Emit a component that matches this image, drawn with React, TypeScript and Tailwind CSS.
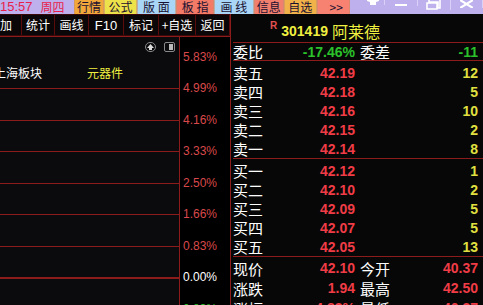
const cn = { fontFamily: '"Noto Sans CJK SC", "Liberation Sans", sans-serif' }
const num = { fontFamily: '"Liberation Sans", Arial, sans-serif' }

const tabs = [
  { t: '行情', w: 'w-[31px]', bg: 'bg-[#f2a73a]' },
  { t: '公式', w: 'w-[33px]', bg: 'bg-[#eee24a]' },
  { t: '版 面', w: 'w-[40px]', bg: 'bg-[#a9d6f6]' },
  { t: '板 指', w: 'w-[39px]', bg: 'bg-[#f27a66]' },
  { t: '画 线', w: 'w-[40px]', bg: 'bg-[#a9d6f6]' },
  { t: '信息', w: 'w-[31px]', bg: 'bg-[#f27e6e]' },
  { t: '自选', w: 'w-[33px]', bg: 'bg-[#f2b24a]' },
  { t: '>>', w: 'w-[34px]', bg: 'bg-[#f78271]' },
]

const tools = [
  { t: '加', w: 'w-[22px]', c: 'justify-start' },
  { t: '统计', w: 'w-[33px]', c: 'justify-center' },
  { t: '画线', w: 'w-[34px]', c: 'justify-center' },
  { t: 'F10', w: 'w-[35px]', c: 'justify-center' },
  { t: '标记', w: 'w-[35px]', c: 'justify-center' },
  { t: '+自选', w: 'w-[37px]', c: 'justify-center' },
  { t: '返回', w: 'w-[34px]', c: 'justify-center' },
]

const axis = [
  { v: '5.83%', c: 'text-[#d9494b]' },
  { v: '4.99%', c: 'text-[#d9494b]' },
  { v: '4.16%', c: 'text-[#d9494b]' },
  { v: '3.33%', c: 'text-[#d9494b]' },
  { v: '2.50%', c: 'text-[#d9494b]' },
  { v: '1.66%', c: 'text-[#d9494b]' },
  { v: '0.83%', c: 'text-[#d9494b]' },
  { v: '0.00%', c: 'text-white' },
  { v: '0.83%', c: 'text-[#2bbf2b]' },
]

const sells = [
  ['卖五', '42.19', '12'],
  ['卖四', '42.18', '5'],
  ['卖三', '42.16', '10'],
  ['卖二', '42.15', '2'],
  ['卖一', '42.14', '8'],
]

const buys = [
  ['买一', '42.12', '1'],
  ['买二', '42.10', '2'],
  ['买三', '42.09', '5'],
  ['买四', '42.07', '5'],
  ['买五', '42.05', '13'],
]

const quotes = [
  ['现价', '42.10', '今开', '40.37'],
  ['涨跌', '1.94', '最高', '42.50'],
  ['涨幅', '4.83%', '最低', '40.37'],
]

function QuoteRow({ a, b, c, d, bColor, dColor, h }: { a: string; b: string; c?: string; d: string; bColor: string; dColor: string; h: string }) {
  return (
    <div className={`flex ${h} items-center`}>
      <div className="flex w-[122px] items-center justify-between">
        <span className="text-[15px] leading-none text-white" style={cn}>{a}</span>
        <span className={`text-[14px] font-bold leading-none ${bColor}`} style={num}>{b}</span>
      </div>
      <div className="ml-[5px] flex flex-1 items-center justify-between pr-[5px]">
        <span className="text-[15px] leading-none text-white" style={cn}>{c}</span>
        <span className={`text-[14px] font-bold leading-none ${dColor}`} style={num}>{d}</span>
      </div>
    </div>
  )
}

export default function App() {
  return (
    <div className="flex h-[305px] w-[483px] flex-col overflow-hidden bg-black">
      {/* title strip */}
      <div className="flex h-[14px] shrink-0 items-stretch bg-[#bdb0ec] text-[12px] leading-[14px] text-[#1a1030]" style={cn}>
        <div className="flex w-[75px] items-center gap-[8px] text-[#e8204a]">
          <span style={num} className="text-[13px]">15:57</span>
          <span>周四</span>
        </div>
        {tabs.map((t) => (
          <div
            key={t.t}
            className={`flex ${t.w} items-center border-x border-[#c89070]/60 ${t.bg} ${t.t === '>>' ? 'justify-start pl-[12px]' : 'justify-center'}`}
          >
            <span className="whitespace-pre">{t.t}</span>
          </div>
        ))}
        <div className="w-[13px]" />
        <div className="flex flex-1 items-start">
          <div className="flex w-[22px] justify-center border-r border-[#d8d0f6]">
            <svg width="12" height="5" viewBox="0 0 12 5"><path d="M0 0h12v1L9 2v3H3V2L0 1z" fill="#fff" /></svg>
          </div>
          <div className="flex w-[33px] justify-center border-r border-[#d8d0f6] pt-[4px]">
            <div className="h-[2px] w-[12px] bg-white" />
          </div>
          <div className="flex w-[33px] justify-center border-r border-[#d8d0f6]">
            <svg width="15" height="10" viewBox="0 0 15 10"><path d="M3 0v2h9v6h2V0M1 3h10v6H1z" fill="none" stroke="#fff" strokeWidth="1.6" /></svg>
          </div>
          <div className="flex w-[32px] justify-center border-r border-[#d8d0f6]">
            <svg width="13" height="8" viewBox="0 0 13 8"><path d="M0 0l13 8M13 0L0 8" stroke="#fff" strokeWidth="2.2" /></svg>
          </div>
        </div>
      </div>

      <div className="flex flex-1">
        {/* left: toolbar + chart */}
        <div className="flex w-[231px] shrink-0 flex-col border-r border-[#8c1c1c]">
          <div className="flex h-[22px] shrink-0 border-y border-[#3a0808] bg-[#0b0708] text-[12px] leading-none text-white" style={cn}>
            {tools.map((t) => (
              <div key={t.t} className={`flex ${t.w} ${t.c} items-center border-r border-[#5a0c0c]`}>
                <span className={t.t === 'F10' ? 'text-[13px]' : ''} style={t.t === 'F10' ? num : undefined}>{t.t}</span>
              </div>
            ))}
          </div>
          <div className="flex flex-1 border-t border-[#8c1c1c]">
            <div className="w-[180px] shrink-0 border-r border-[#8c1c1c] bg-[#0b0b0e]">
              <div className="flex h-[20px] items-center justify-end gap-[8px] pr-[4px]">
                <div className="flex h-[10px] w-[11px] items-center justify-center rounded-full border border-[#8a8a8a]">
                  <svg width="7" height="6" viewBox="0 0 7 6"><path d="M3.5 0L7 4H5v2H2V4H0z" fill="#ddd" /></svg>
                </div>
                <div className="flex h-[10px] w-[11px] justify-end rounded-[2px] border border-[#8a8a8a] p-[1px]">
                  <div className="w-[4px] bg-[#bbb]" />
                </div>
              </div>
              <div className="flex h-[31px] items-center text-[12px] leading-none" style={cn}>
                <span className="ml-[-6px] text-white">上海板块</span>
                <span className="ml-[45px] text-[#f0f040]">元器件</span>
              </div>
              {[0, 1, 2, 3, 4, 5].map((i) => (
                <div key={i} className="h-[31.5px] border-t border-[#8c1c1c]" />
              ))}
              <div className="h-[31px] border-t-2 border-[#8c1c1c]" />
            </div>
            <div className="flex flex-1 flex-col pt-[4px]">
              {axis.map((a, i) => (
                <div key={i} className={`flex h-[31.5px] shrink-0 items-center pl-[3px] text-[12px] leading-none ${a.c}`} style={num}>
                  {a.v}
                </div>
              ))}
            </div>
          </div>
        </div>

        {/* right: quote panel */}
        <div className="flex flex-1 flex-col bg-[#070707] pl-[2px]">
          <div className="flex h-[29px] shrink-0 items-center border-b border-[#8c1c1c] pl-[37px] pt-[5px]">
            <span className="mb-[10px] mr-[4px] text-[10px] font-bold leading-none text-[#e05050]" style={num}>R</span>
            <span className="text-[14px] font-bold leading-none text-[#f0f040]" style={num}>301419</span>
            <span className="ml-[4px] text-[16px] leading-none text-[#f0f040]" style={cn}>阿莱德</span>
          </div>
          <div className="border-b border-[#8c1c1c]">
            <QuoteRow a="委比" b="-17.46%" c="委差" d="-11" bColor="text-[#2bc22b]" dColor="text-[#2bc22b]" h="h-[17px]" />
          </div>
          <div className="border-b border-[#8c1c1c] pt-[2px]">
            {sells.map((r) => (
              <QuoteRow key={r[0]} a={r[0]} b={r[1]} d={r[2]} bColor="text-[#f03c46]" dColor="text-[#e0e040]" h="h-[19px]" />
            ))}
          </div>
          <div className="border-b border-[#8c1c1c] pt-[2px]">
            {buys.map((r) => (
              <QuoteRow key={r[0]} a={r[0]} b={r[1]} d={r[2]} bColor="text-[#f03c46]" dColor="text-[#e0e040]" h="h-[19px]" />
            ))}
          </div>
          <div className="pt-[1px]">
            {quotes.map((r) => (
              <QuoteRow key={r[0]} a={r[0]} b={r[1]} c={r[2]} d={r[3]} bColor="text-[#f03c46]" dColor="text-[#f03c46]" h="h-[20px]" />
            ))}
          </div>
        </div>
      </div>
    </div>
  )
}
